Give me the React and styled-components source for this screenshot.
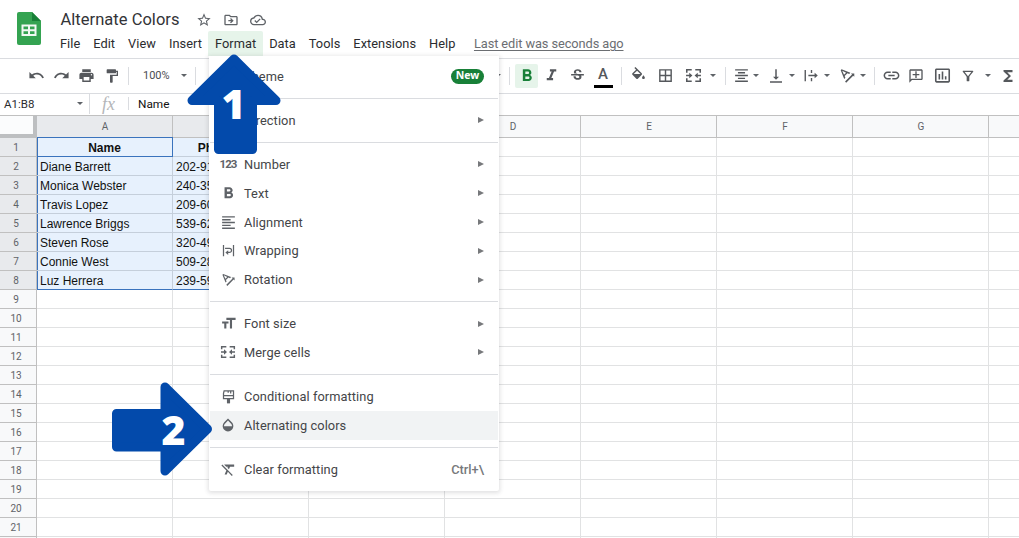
import React from "react";
import styled, { createGlobalStyle } from "styled-components";
import {
  MdBorderAll,
  MdFormatAlignCenter,
  MdFormatAlignLeft,
  MdFormatBold,
  MdFormatClear,
  MdFormatItalic,
  MdFormatPaint,
  MdFormatSize,
  MdFunctions,
  MdInsertChartOutlined,
  MdLink,
  MdOpacity,
  MdOutlineAddComment,
  MdOutlineCloudDone,
  MdOutlineDriveFileMove,
  MdOutlineFilterAlt,
  MdPrint,
  MdRedo,
  MdStarBorder,
  MdStrikethroughS,
  MdTextRotationAngleup,
  MdUndo,
  MdVerticalAlignBottom,
} from "react-icons/md";

const menus = ["File", "Edit", "View", "Insert", "Format", "Data", "Tools", "Extensions", "Help"];
const columns = ["A", "B", "C", "D", "E", "F", "G", ""];

const people = [
  ["Name", "Phone Number"],
  ["Diane Barrett", "202-918-2132"],
  ["Monica Webster", "240-351-7704"],
  ["Travis Lopez", "209-608-4417"],
  ["Lawrence Briggs", "539-625-1180"],
  ["Steven Rose", "320-491-5526"],
  ["Connie West", "509-283-9031"],
  ["Luz Herrera", "239-594-6258"],
];

const MergeIcon = ({ size }) => (
  <svg width={size} height={size} viewBox="0 0 24 24" fill="none" stroke="currentColor" strokeWidth="2.2">
    <path d="M9.500 4H2.500v4M14.500 4h7v4M9.500 20H2.500v-4M14.500 20h7v-4" />
    <path d="M1.500 12h6M22.500 12h-6" />
    <path d="M6 8l4.500 4-4.500 4zM18 8l-4.500 4 4.500 4z" fill="currentColor" stroke="none" />
  </svg>
);

const OverflowIcon = ({ size }) => (
  <svg width={size} height={size} viewBox="0 0 24 24" fill="none" stroke="currentColor" strokeWidth="2.200">
    <path d="M2 3v18M12 3v5M12 16v5M7 12h12" />
    <path d="M17 7.500l5 4.500-5 4.500z" fill="currentColor" stroke="none" />
  </svg>
);

const WrapIcon = ({ size }) => (
  <svg width={size} height={size} viewBox="0 0 24 24" fill="none" stroke="currentColor" strokeWidth="2">
    <path d="M4 3v18M20 3v18M6.500 8.500h7a3.300 3.300 0 0 1 0 6.600H10" />
    <path d="M11.500 11.500v7.500L7 15.200z" fill="currentColor" stroke="none" />
  </svg>
);

const BrushIcon = ({ size }) => (
  <svg width={size} height={size} viewBox="0 0 24 24" fill="none" stroke="currentColor" strokeWidth="2">
    <path d="M5 3h15v12.500H4V7zM4 10.500h16M15.500 3v4M11.500 3v3" />
    <path d="M9.500 15h5v8h-5z" fill="currentColor" stroke="none" />
  </svg>
);

const FillIcon = ({ size }) => (
  <svg width={size} height={size} viewBox="0 0 24 24" fill="currentColor">
    <path d="M16.560 8.940L7.620 0 6.210 1.410l2.380 2.380-5.150 5.150a1.490 1.490 0 0 0 0 2.120l5.500 5.500c.29.29.68.44 1.060.44s.77-.15 1.060-.44l5.500-5.500c.59-.58.59-1.530 0-2.120zM5.210 10L10 5.210 14.790 10H5.210zM19 11.500s-2 2.170-2 3.500c0 1.100.9 2 2 2s2-.9 2-2c0-1.330-2-3.500-2-3.500z" />
  </svg>
);

const NumberIcon = () => <Digits>123</Digits>;

const menuSections = [
  [{ label: "Theme", badge: "New" }],
  [{ label: "Direction", sub: true }],
  [
    { label: "Number", icon: NumberIcon, sub: true },
    { label: "Text", icon: MdFormatBold, size: 19, sub: true },
    { label: "Alignment", icon: MdFormatAlignLeft, size: 17, sub: true },
    { label: "Wrapping", icon: WrapIcon, size: 15, sub: true },
    { label: "Rotation", icon: MdTextRotationAngleup, size: 17, sub: true },
  ],
  [
    { label: "Font size", icon: MdFormatSize, size: 17, sub: true },
    { label: "Merge cells", icon: MergeIcon, sub: true },
  ],
  [
    { label: "Conditional formatting", icon: BrushIcon, size: 15 },
    { label: "Alternating colors", icon: MdOpacity, active: true },
  ],
  [{ label: "Clear formatting", icon: MdFormatClear, size: 17, shortcut: "Ctrl+\\" }],
];

export default function App() {
  return (
    <Page>
      <GlobalStyle />
      <Header>
        <Logo width="24" height="33" viewBox="0 0 24 33">
          <path d="M2 0h13l9 9v22a2 2 0 0 1-2 2H2a2 2 0 0 1-2-2V2a2 2 0 0 1 2-2z" fill="#34a351" />
          <path d="M15 0l9 9h-9z" fill="#188038" />
          <path
            d="M4.500 12.500h15v11.500h-15zM6.500 14.500v2.800h4.500v-2.800zM13 14.500v2.800h4.500v-2.800zM6.500 19.200V22h4.500v-2.800zM13 19.200V22h4.500v-2.800z"
            fill="#f1f8f3"
            fillRule="evenodd"
          />
        </Logo>
        <HeaderBody>
          <TitleRow>
            <Title>Alternate Colors</Title>
            <MdStarBorder size={16} />
            <MdOutlineDriveFileMove size={16} />
            <MdOutlineCloudDone size={16} />
          </TitleRow>
          <MenuBar>
            {menus.map((name) => (
              <MenuName key={name} $open={name === "Format"}>
                {name}
              </MenuName>
            ))}
            <LastEdit>Last edit was seconds ago</LastEdit>
          </MenuBar>
        </HeaderBody>
      </Header>

      <Toolbar>
        <Tool $ml={26}><MdUndo size={17} /></Tool>
        <Tool $ml={5.5}><MdRedo size={17} /></Tool>
        <Tool $ml={5}><MdPrint size={17} /></Tool>
        <Tool $ml={5.5}><MdFormatPaint size={16} /></Tool>
        <Divider $ml={6} />
        <Zoom>100%</Zoom>
        <Caret $ml={11} />
        <Divider $ml={8} />
        <Spacer />
        <Caret />
        <Divider $ml={8} />
        <Tool $ml={5} $w={23} $on><MdFormatBold size={20} /></Tool>
        <Tool $ml={3.5}><MdFormatItalic size={19} /></Tool>
        <Tool $ml={6}><MdStrikethroughS size={17} /></Tool>
        <TextColor>A</TextColor>
        <Divider $ml={8} />
        <Tool $ml={6}><FillIcon size={17} /></Tool>
        <Tool $ml={7}><MdBorderAll size={17} /></Tool>
        <Tool $ml={8}><MergeIcon size={17} /></Tool>
        <Caret $ml={7} />
        <Divider $ml={9} />
        <Tool $ml={5}><MdFormatAlignCenter size={17} /></Tool>
        <Caret $ml={2} />
        <Tool $ml={7}><MdVerticalAlignBottom size={18} /></Tool>
        <Caret $ml={3} />
        <Tool $ml={6}><OverflowIcon size={15} /></Tool>
        <Caret $ml={3} />
        <Tool $ml={7}><MdTextRotationAngleup size={19} /></Tool>
        <Caret $ml={2.5} />
        <Divider $ml={8.5} />
        <Tool $ml={6}><MdLink size={19} /></Tool>
        <Tool $ml={5} $flip><MdOutlineAddComment size={16} /></Tool>
        <Tool $ml={6}><MdInsertChartOutlined size={19} /></Tool>
        <Tool $ml={6}><MdOutlineFilterAlt size={16} /></Tool>
        <Caret $ml={7} />
        <Tool $ml={7}><MdFunctions size={18} /></Tool>
      </Toolbar>

      <FormulaBar>
        <RangeName>A1:B8</RangeName>
        <Caret />
        <FormulaDivider $ml={6} $h={20} />
        <Fx>fx</Fx>
        <FormulaDivider $ml={0} $h={13} />
        <FormulaText>Name</FormulaText>
      </FormulaBar>

      <Sheet>
        <Corner />
        {columns.map((name, i) => (
          <ColumnHead key={i} $selected={i < 2}>{name}</ColumnHead>
        ))}
        {Array.from({ length: 22 }, (_, row) => (
          <React.Fragment key={row}>
            <RowHead $selected={row < 8}>{row < 21 ? row + 1 : ""}</RowHead>
            {columns.map((name, col) => {
              const selected = row < 8 && col < 2;
              return (
                <Cell
                  key={col}
                  $selected={selected}
                  $head={row === 0}
                  $left={selected && col === 0}
                  $last={selected && row === 7}
                  $active={row === 0 && col === 0}
                >
                  {selected ? people[row][col] : ""}
                </Cell>
              );
            })}
          </React.Fragment>
        ))}
      </Sheet>

      <Dropdown>
        {menuSections.map((section, i) => (
          <Section key={i}>
            {section.map(({ label, icon: Icon, size = 16, sub, badge, shortcut, active }) => (
              <Item key={label} $active={active}>
                <ItemIcon>{Icon && <Icon size={size} />}</ItemIcon>
                <ItemLabel>{label}</ItemLabel>
                {badge && <Badge>{badge}</Badge>}
                {shortcut && <Shortcut>{shortcut}</Shortcut>}
                {sub && <SubArrow />}
              </Item>
            ))}
          </Section>
        ))}
      </Dropdown>

      <Step $x={187} $y={54} $w={94} $h={100}>
        <StepShape width="94" height="100" viewBox="0 0 94 100">
          <path d="M47 5L89 46.500H65.500V95.500H31.500V46.500H5z" />
        </StepShape>
        <StepNumber $x={34.5} $y={28}>1</StepNumber>
      </Step>
      <Step $x={112} $y={382} $w={100} $h={94}>
        <StepShape width="100" height="94" viewBox="0 0 100 94">
          <path d="M95.500 47L53 89V65H4.500V31.500H53V5z" />
        </StepShape>
        <StepNumber $x={49.5} $y={26}>2</StepNumber>
      </Step>
    </Page>
  );
}

const GlobalStyle = createGlobalStyle`
  * {
    box-sizing: border-box;
  }
  body {
    margin: 0;
    overflow: hidden;
  }
  svg {
    display: block;
    flex: none;
  }
`;

const Page = styled.div`
  position: relative;
  width: 1019px;
  height: 538px;
  overflow: hidden;
  background: #fff;
  color: #2b2c2f;
  font-family: Roboto, "Liberation Sans", sans-serif;
`;

const Header = styled.header`
  display: flex;
  height: 58px;
  padding-left: 17px;
`;
const Logo = styled.svg`
  margin-top: 12px;
`;
const HeaderBody = styled.div`
  padding: 8px 0 0 12.500px;
`;
const TitleRow = styled.div`
  display: flex;
  align-items: center;
  gap: 11px;
  height: 23px;
  padding-left: 7px;
  color: #5f6368;
`;
const Title = styled.h1`
  margin: 0 5px 0 0;
  color: #333437;
  font-size: 16.500px;
  font-weight: 400;
  letter-spacing: 0.030px;
`;
const MenuBar = styled.nav`
  display: flex;
  height: 25px;
  font-size: 12.800px;
  line-height: 25px;
  letter-spacing: 0.040px;
`;
const MenuName = styled.span`
  padding: 0 6.500px;
  border-radius: 2px 2px 0 0;
  background: ${(p) => (p.$open ? "#e6f4ea" : "transparent")};
`;
const LastEdit = styled.span`
  margin-left: 12px;
  color: #6b6e72;
  letter-spacing: -0.080px;
  text-decoration: underline;
  text-underline-offset: 2px;
`;

const Toolbar = styled.div`
  display: flex;
  align-items: center;
  height: 36px;
  padding-bottom: 1px;
  border-top: 1px solid #dadce0;
  border-bottom: 1px solid #dadce0;
  color: #55585c;
`;
const Tool = styled.span`
  display: flex;
  flex: none;
  align-items: center;
  justify-content: center;
  width: ${(p) => p.$w || 20}px;
  height: 24px;
  margin-left: ${(p) => p.$ml}px;
  border-radius: 2px;
  background: ${(p) => (p.$on ? "#e6f4ea" : "transparent")};
  color: ${(p) => (p.$on ? "#188038" : "inherit")};
  transform: ${(p) => (p.$flip ? "scaleX(-1)" : "none")};
`;
const TextColor = styled.span`
  width: 19px;
  height: 23px;
  margin: 1px 0.500px 0 6px;
  border-bottom: 3px solid #000;
  font-size: 15px;
  font-weight: 500;
  line-height: 18px;
  text-align: center;
`;
const Divider = styled.span`
  flex: none;
  width: 1px;
  height: 18px;
  margin-left: ${(p) => p.$ml}px;
  background: #dadce0;
`;
const Caret = styled.span`
  flex: none;
  width: 6px;
  margin-left: ${(p) => p.$ml || 0}px;
  border: 3px solid transparent;
  border-top: 3.500px solid #5f6368;
  border-bottom: 0;
`;
const Zoom = styled.span`
  width: 27px;
  margin-left: 14px;
  color: #4a4d51;
  font-size: 11px;
`;
const Spacer = styled.span`
  flex: none;
  width: 299px;
`;

const FormulaBar = styled.div`
  display: flex;
  align-items: center;
  height: 21px;
  padding: 0 0 2px 4px;
`;
const RangeName = styled.span`
  width: 73px;
  font-size: 11.500px;
`;
const FormulaDivider = styled(Divider)`
  height: ${(p) => p.$h}px;
`;
const Fx = styled.span`
  width: 38px;
  padding-left: 12px;
  color: #b4b6b9;
  font-family: "Liberation Serif", serif;
  font-size: 18px;
  font-style: italic;
  line-height: 18px;
`;
const FormulaText = styled.span`
  margin-left: 9px;
  color: #111;
  font-size: 11.800px;
`;

const Sheet = styled.div`
  display: grid;
  grid-template-columns: 37px repeat(8, 136px);
  grid-template-rows: 23px;
  grid-auto-rows: 19px;
`;
const Corner = styled.div`
  border-top: 1px solid #c0c0c0;
  border-right: 4px solid #bdbfc1;
  border-bottom: 4px solid #bdbfc1;
  background: #fbfcfd;
`;
const ColumnHead = styled.div`
  padding-left: 1px;
  border: solid #c0c0c0;
  border-width: 1px 1px 1px 0;
  background: ${(p) => (p.$selected ? "#e8eaed" : "#f8f9fa")};
  color: #5f6368;
  font-size: 10px;
  line-height: 21px;
  text-align: center;
`;
const RowHead = styled.div`
  border: solid #c0c0c0;
  border-width: 0 1px 1px 0;
  padding-right: 4px;
  background: ${(p) => (p.$selected ? "#e8eaed" : "#f8f9fa")};
  color: #5f6368;
  font-size: 10px;
  line-height: 19px;
  text-align: center;
`;
const Cell = styled.div`
  overflow: hidden;
  padding-left: ${(p) => (p.$head ? 0 : 3)}px;
  border-right: 1px solid #e1e2e3;
  border-bottom: 1px solid #e1e2e3;
  background: ${(p) => (p.$selected ? "#e7f1fd" : "#fff")};
  border-color: ${(p) => (p.$selected ? "#c5cfdb" : "#e1e2e3")};
  border-bottom-color: ${(p) => p.$last && "#3a73bd"};
  box-shadow: ${(p) => (p.$active ? "inset 1px 0 #3a73bd, 0 -1px #3a73bd" : p.$left ? "inset 1px 0 #3a73bd" : "none")};
  ${(p) => p.$active && "border-color: #3a73bd;"}
  color: #111;
  font-family: "Liberation Sans", Arial, sans-serif;
  font-size: 12px;
  font-weight: ${(p) => (p.$head ? 700 : 400)};
  line-height: 20px;
  text-align: ${(p) => (p.$head ? "center" : "left")};
  white-space: nowrap;
`;

const Dropdown = styled.div`
  position: absolute;
  left: 209px;
  top: 56px;
  width: 290px;
  height: 435px;
  padding: 6.100px 1px 0;
  border-radius: 0 0 2px 2px;
  background: #fff;
  box-shadow: 0 1px 4px 1px rgba(60, 64, 67, 0.16);
`;
const Section = styled.div`
  & + & {
    margin-top: 7.400px;
    padding-top: 6.800px;
    border-top: 1px solid #dadce0;
  }
`;
const Item = styled.div`
  display: flex;
  align-items: center;
  height: 28.800px;
  padding: 0 14px 0 8px;
  background: ${(p) => (p.$active ? "#f1f3f4" : "transparent")};
`;
const ItemIcon = styled.span`
  display: flex;
  justify-content: center;
  width: 20px;
  margin-right: 6px;
  color: #5f6368;
`;
const Digits = styled.span`
  font-size: 11.500px;
  font-weight: 700;
  letter-spacing: -1px;
  line-height: 16px;
`;
const ItemLabel = styled.span`
  flex: 1;
  color: #444548;
  font-size: 12.800px;
  letter-spacing: 0.080px;
`;
const Badge = styled.span`
  width: 33px;
  height: 15px;
  border-radius: 8px;
  background: #188038;
  color: #fff;
  font-family: "Open Sans", sans-serif;
  font-size: 10.500px;
  font-weight: 700;
  line-height: 13px;
  text-align: center;
`;
const Shortcut = styled.span`
  color: #77797c;
  font-size: 12.800px;
  font-weight: 500;
`;
const SubArrow = styled.span`
  border: 3px solid transparent;
  border-left: 6.500px solid #77797c;
  border-right: 0;
`;

const Step = styled.div`
  position: absolute;
  left: ${(p) => p.$x}px;
  top: ${(p) => p.$y}px;
  width: ${(p) => p.$w}px;
  height: ${(p) => p.$h}px;
`;
const StepShape = styled.svg`
  fill: #034aab;
  stroke: #034aab;
  stroke-width: 9px;
  stroke-linejoin: round;
`;
const StepNumber = styled.span`
  position: absolute;
  left: ${(p) => p.$x}px;
  top: ${(p) => p.$y}px;
  color: #fff;
  font-family: "Open Sans", sans-serif;
  font-size: 41px;
  font-weight: 800;
  line-height: 42px;
`;
